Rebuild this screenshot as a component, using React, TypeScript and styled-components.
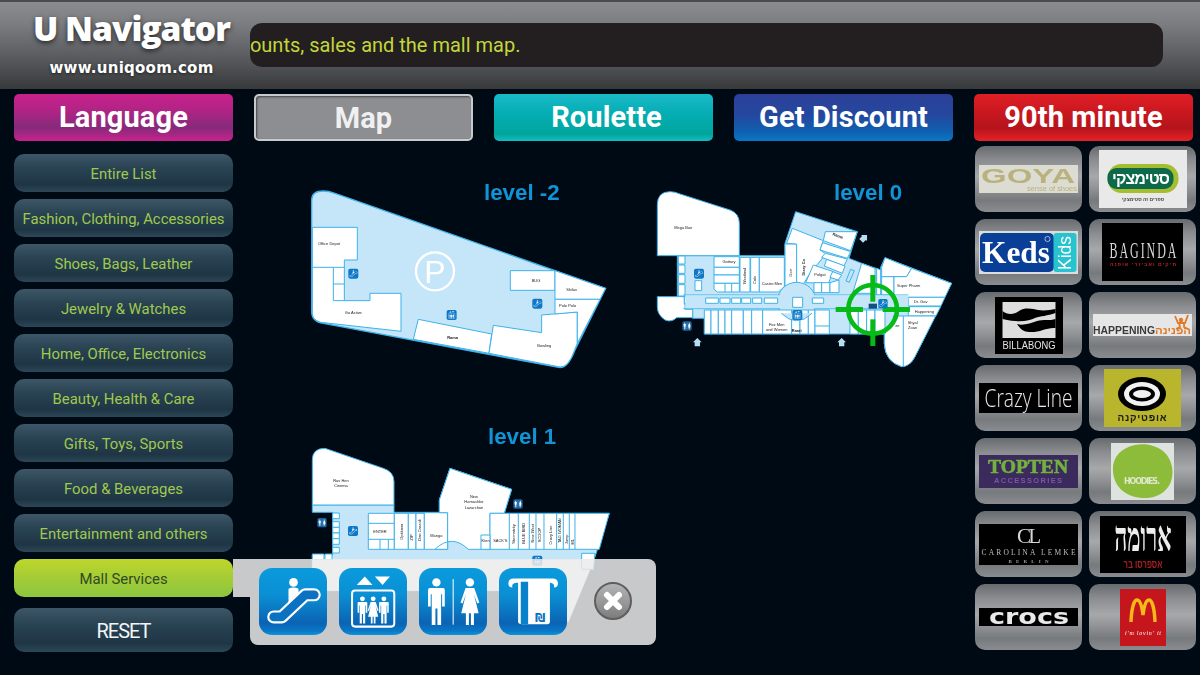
import React from "react";
import styled, { createGlobalStyle } from "styled-components";

const Global = createGlobalStyle`
  html, body { margin: 0; padding: 0; background: #000a14; }
  * { box-sizing: border-box; }
`;

const Page = styled.div`
  width: 1200px; height: 675px; overflow: hidden; position: relative;
  background: #000a14; font-family: Roboto, "Liberation Sans", sans-serif;
`;
const Header = styled.header`
  height: 89px; display: flex; align-items: center; padding: 0 37px 0 0;
  border-top: 2px solid #4a4b4d;
  background: linear-gradient(180deg, #8b8c8e 0%, #7c7d80 25%, #5d5e61 60%, #38393b 100%);
`;
const Brand = styled.div`
  width: 250px; height: 100%; flex: none; display: flex; flex-direction: column; align-items: center; padding-left: 13px;
`;
const BrandName = styled.div`
  font: 800 33.5px/40px "Open Sans", sans-serif; color: #fff; margin-top: 6px; letter-spacing: -1px;
  text-shadow: 0 2px 5px rgba(0,0,0,.65); white-space: nowrap;
`;
const BrandUrl = styled.div`
  font: 700 15px/16px "DejaVu Sans", sans-serif; color: #fff; margin-top: 12px; letter-spacing: .25px;
  text-shadow: 0 1px 3px rgba(0,0,0,.6); white-space: nowrap;
`;
const Ticker = styled.div`
  flex: 1; height: 44px; margin-top: -1px; border-radius: 12px; background: #231f20; overflow: hidden;
  display: flex; align-items: center; white-space: nowrap;
`;
const TickerText = styled.span`
  font: 400 20px/24px Roboto, sans-serif; color: #c3d63b; letter-spacing: 0; margin-left: -37px;
`;
const Body = styled.div`
  display: grid; grid-template-columns: 219px 700px 221px; column-gap: 21px; padding: 5px 0 0 14px;
  grid-template-rows: 47px 1fr; row-gap: 5px; height: 586px;
`;
const TabRow = styled.nav`
  grid-column: 1 / 4; display: grid; grid-template-columns: repeat(5, 219px); column-gap: 21px;
`;
const tabBg: Record<string, string> = {
  language: "linear-gradient(180deg,#c9218b 0%,#b02485 35%,#862a7c 72%,#a92683 87%,#cb2190 100%)",
  map: "#8d8e91",
  roulette: "linear-gradient(180deg,#1ab9c8 0%,#05aeb4 40%,#00a59c 85%,#16bcc2 100%)",
  discount: "linear-gradient(180deg,#2c3f98 0%,#24489f 45%,#0f60b0 80%,#0a78c4 100%)",
  minute: "linear-gradient(180deg,#e01f26 0%,#c9171f 40%,#b4141c 72%,#d21b22 88%,#e3232a 100%)",
};
const Tab = styled.button<{ $kind: string }>`
  height: 47px; border-radius: 5px; padding: 0 0 2px ${p => p.$kind === "roulette" ? 6 : 0}px; margin: 0;
  color: ${p => p.$kind === "map" ? "#f0f0f0" : "#fff"};
  background: ${p => tabBg[p.$kind]};
  border: ${p => p.$kind === "map" ? "2px solid #c9cacc" : "0"};
  box-shadow: ${p => p.$kind === "map" ? "inset 1px 1px 2px #444" : "none"};
  font: 700 29px/44px Roboto, sans-serif; letter-spacing: .1px; text-align: center;
`;
const SideList = styled.div`
  display: flex; flex-direction: column; gap: 7px; padding-top: 8px;
`;
const SideItem = styled.button<{ $active?: boolean; $reset?: boolean }>`
  width: 219px; height: ${p => p.$reset ? 44 : 38}px; margin-top: ${p => p.$reset ? 4 : 0}px; border: 0; padding: 2px 0 0;
  border-radius: 10px; text-align: center; white-space: nowrap;
  font: 400 ${p => p.$reset ? 20 : 14.9}px/1 Roboto, sans-serif;
  letter-spacing: ${p => p.$reset ? "-1px" : "0"};
  color: ${p => p.$active ? "#30491f" : p.$reset ? "#f2f5f5" : "#a0c94e"};
  background: ${p => p.$active
    ? "linear-gradient(180deg,#bed62b 0%,#a4cc36 50%,#8cc63f 100%)"
    : "linear-gradient(180deg,#3d5768 0%,#2a4454 35%,#1e3544 80%,#2c4757 100%)"};
  position: relative; z-index: 2;
`;
const Center = styled.main` position: relative; `;
const MapSvg = styled.svg` display: block; filter: blur(.3px); `;
const LevelLabel = styled.text`
  font: 700 22.3px "Liberation Sans", sans-serif; fill: #0f94d6;
`;
const ShopLabel = styled.text<{ $bold?: boolean }>`
  font: ${p => p.$bold ? 700 : 400} 12px "Liberation Sans", sans-serif; fill: #222; text-anchor: middle;
`;
const Panel = styled.div`
  position: absolute; left: -4px; top: 413px; width: 406px; height: 86px; border-radius: 0 8px 8px 8px;
  background: rgba(235,235,235,.85); display: flex; align-items: center; padding: 0 0 2px 9px; gap: 12px; z-index: 3;
  &::before {
    content: ""; position: absolute; left: -17px; top: 0; width: 17px; height: 38px; background: #c9c9c9;
  }
`;
const ServiceBtn = styled.button`
  width: 68px; height: 67px; padding: 0; border: 0; border-radius: 13px; flex: none;
  background: linear-gradient(180deg,#0a9bdc 0%,#0b8fd4 40%,#0a64b4 82%,#0a77c6 94%,#0a95d8 100%);
  svg { display: block; }
`;
const CloseBtn = styled.button`
  width: 38px; height: 38px; padding: 0; margin-left: 15px; border-radius: 50%; border: 2px solid #5e5e5e;
  background: linear-gradient(180deg,#b3b3b3 0%,#9a9a9a 50%,#7d7d7d 100%);
  display: flex; align-items: center; justify-content: center;
`;
const Tiles = styled.aside`
  display: grid; grid-template-columns: 107px 107px; column-gap: 7px; row-gap: 7px; grid-auto-rows: 66px;
`;
const Tile = styled.div`
  border-radius: 10px; display: flex; align-items: center; justify-content: center;
  background: linear-gradient(180deg,#686b6e 0%,#8b8d90 22%,#a6a8aa 46%,#939598 62%,#777a7d 82%,#8a8c8f 100%);
`;
const LogoSvg = styled.svg` display: block; filter: blur(.25px); `;
const LogoText = styled.text<{ $f?: string; $w?: number; $it?: boolean }>`
  font-family: ${p => p.$f || '"Liberation Sans"'}, sans-serif;
  font-weight: ${p => p.$w || 400};
  font-style: ${p => p.$it ? "italic" : "normal"};
  text-anchor: middle;
`;

const BLUE = "#3db2ea";
const Room = ({ p, fill = "#fff" }: { p: string; fill?: string }) => (
  <polygon points={p} fill={fill} stroke={BLUE} strokeWidth={3} />
);
const Line = ({ d }: { d: string }) => <path d={d} fill="none" stroke={BLUE} strokeWidth={3} />;

const EscalatorGlyph = () => (
  <g>
    <circle cx="103" cy="43" r="13" fill="#fff" />
    <path d="M88 62 Q103 54 118 62 V92 L88 112 Z" fill="#fff" />
    <path d="M44 146 H68 L138 80 H165" fill="none" stroke="#fff" strokeWidth="39" strokeLinecap="round" strokeLinejoin="round" />
    <path d="M44 146 H68 L138 80 H165" fill="none" stroke="#0a72c0" strokeWidth="26" strokeLinecap="round" strokeLinejoin="round" />
  </g>
);
const Person = ({ x, y, s = 1, dress }: { x: number; y: number; s?: number; dress?: boolean }) => (
  <g transform={`translate(${x} ${y}) scale(${s})`}>
    <circle cx="0" cy="0" r="12.5" fill="#fff" />
    {dress
      ? <path d="M-13 17 H13 L28 60 L22 63 L12 36 L26 92 H12 V127 H3 V92 H-3 V127 H-12 V92 H-26 L-12 36 L-22 63 L-28 60 Z" fill="#fff" />
      : <path d="M-20 17 H20 Q25 17 25 23 V72 H17 V35 H14 V127 H3 V78 H-3 V127 H-14 V35 H-17 V72 H-25 V23 Q-25 17 -20 17 Z" fill="#fff" />}
  </g>
);
const ElevatorGlyph = () => (
  <g>
    <polygon points="77,25 53,51 100,51" fill="#fff" />
    <polygon points="107,25 152,25 130,51" fill="#fff" />
    <rect x="39" y="67" width="126" height="108" rx="9" fill="none" stroke="#fff" strokeWidth="6" />
    <Person x={70} y={92} s={0.58} />
    <Person x={102} y={92} s={0.58} dress />
    <Person x={134} y={92} s={0.58} />
  </g>
);
const ToiletGlyph = () => (
  <g>
    <Person x={52} y={43} />
    <rect x="100.5" y="33" width="3" height="136" fill="#fff" />
    <Person x={152} y={43} dress />
  </g>
);
const AtmGlyph = () => (
  <g>
    <path d="M40 58 Q28 58 28 46 Q28 31 44 31 H160 Q176 31 176 46 Q176 58 164 58 Q168 46 152 44 V44 H52 Q36 46 40 58 Z" fill="#fff" />
    <path d="M57 41 H152 V160 Q152 168 144 168 H69 Q57 168 57 160 Z" fill="#fff" />
    <rect x="65" y="41" width="22" height="127" fill="#0a82cb" />
    <text x="123" y="161" textAnchor="middle" fill="#0a72c0" fontFamily="DejaVu Sans" fontWeight="700" fontSize="34">₪</text>
  </g>
);
const MiniIcon = ({ x, y, size, kind, dark }: { x: number; y: number; size: number; kind: "esc" | "ele" | "wc"; dark?: boolean }) => (
  <g transform={`translate(${x - size / 2} ${y - size / 2})`}>
    <rect width={size} height={size} rx={size * 0.18} fill={dark ? "#1a66a4" : "#0d78c8"} />
    <g transform={`scale(${size / 203})`}>
      {kind === "esc" && <EscalatorGlyph />}
      {kind === "ele" && <ElevatorGlyph />}
      {kind === "wc" && <ToiletGlyph />}
    </g>
  </g>
);
const Home = ({ x, y, r = 0 }: { x: number; y: number; r?: number }) => (
  <polygon transform={`translate(${x} ${y}) rotate(${r})`} points="0,-13 13,0 8,0 8,12 -8,12 -8,0 -13,0" fill="#b5def5" />
);

const LevelMinus2 = () => (
  <g transform="translate(300 180) scale(.3333)">
    <path d="M35 60 Q35 33 70 33 Q85 33 105 40 L917 325 L825 510 Q805 563 780 563 L70 430 Q35 425 35 395 Z" fill="#c5e6f8" stroke={BLUE} strokeWidth={4} />
    <path d="M37 142 H172 V240 H133 V362 H210 V340 H303 V454 L62 427 Q37 420 37 400 Z" fill="#fff" stroke={BLUE} strokeWidth={3} />
    <Line d="M37 262 H133 M100 262 V362 H133 M100 312 H133" />
    <Room p="355,418 575,462 567,520 340,478" />
    <path d="M580 436 L725 458 V405 L832 396 V490 L823 512 Q805 563 780 561 L567 520 Z" fill="#fff" stroke={BLUE} strokeWidth={3} />
    <Room p="631,272 765,272 765,331 631,331" />
    <Room p="765,272 917,325 900,358 765,358" />
    <Room p="765,358 900,358 832,490 832,396 765,402" />
    <circle cx="405" cy="274" r="57" fill="none" stroke="#fff" strokeWidth="7" />
    <text x="405" y="308" textAnchor="middle" fill="#fff" fontFamily="Liberation Sans" fontSize="96">P</text>
    <MiniIcon x={160} y={281} size={30} kind="esc" />
    <MiniIcon x={712} y={371} size={30} kind="esc" />
    <MiniIcon x={455} y={405} size={30} kind="ele" />
    <ShopLabel x={87} y={196}>Office Depot</ShopLabel>
    <ShopLabel x={708} y={305}>BUG</ShopLabel>
    <ShopLabel x={815} y={333}>Shilav</ShopLabel>
    <ShopLabel x={803} y={380}>Polo Polo</ShopLabel>
    <ShopLabel x={160} y={401}>Go Active</ShopLabel>
    <ShopLabel x={458} y={478} $bold>Rama</ShopLabel>
    <ShopLabel x={733} y={502}>Bowling</ShopLabel>
  </g>
);

const LevelZero = () => (
  <g transform="translate(640 180) scale(.3333)">
    <path d="M112 227 H435 V190 L467 95 L652 155 L627 235 L665 250 L722 270 V262 L735 233 L935 310 L825 530 Q810 560 785 560 Q735 545 733 490 V462 H193 V415 H158 V390 L133 372 V350 H112 Z" fill="#c5e6f8" stroke={BLUE} strokeWidth={3} />
    <path d="M52 75 Q52 35 90 35 Q105 35 120 42 L270 90 Q298 100 298 130 V227 H52 Z" fill="#fff" stroke={BLUE} strokeWidth={3} />
    <path d="M52 350 H133 V372 L158 390 V413 H110 Q95 428 75 420 Q52 405 52 380 Z" fill="#fff" stroke={BLUE} strokeWidth={3} />
    <Room p="115,228 135,228 135,252 115,252" />
    <Room p="115,255 135,255 135,280 115,280" />
    <Room p="115,284 135,284 135,310 115,310" />
    <Room p="115,314 135,314 135,348 115,348" />
    <Room p="133,350 158,350 158,370 133,370" />
    <Room p="135,372 158,372 158,388 135,388" />
    <Room p="165,302 185,302 185,332 165,332" />
    <Room p="222,230 298,230 298,262 222,262" />
    <Room p="222,262 298,262 298,285 222,285" />
    <Room p="222,285 298,285 298,310 222,310" />
    <Room p="222,310 298,310 298,336 232,336 222,328" />
    <Line d="M255 310 V336 M275 310 V336" />
    <Room p="300,232 330,232 330,336 300,336" />
    <Room p="332,232 358,232 358,336 332,336" />
    <Room p="358,232 433,232 433,320 415,336 358,336" />
    <Room p="435,192 470,192 470,310 435,320" />
    <Room p="457,145 550,182 540,210 558,222 510,280 490,312 470,312 470,192 440,190" />
    <Room p="556,155 652,155 632,212 550,182" />
    <Room p="548,188 632,215 622,235 540,210" />
    <Room p="556,220 622,237 612,258 545,232" />
    <Room p="560,238 615,258 607,280 553,258" />
    <Room p="520,255 580,275 565,310 497,308" />
    <Room p="578,275 605,285 595,300 570,292" />
    <Room p="522,308 545,308 545,338 522,338" />
    <Room p="545,308 570,308 570,338 545,338" />
    <Room p="570,308 597,300 597,338 570,338" />
    <Room p="632,268 643,272 628,307 618,303" fill="#c5e6f8" />
    <Room p="665,250 705,265 705,340 638,340" />
    <Room p="710,265 722,270 722,345 710,345" />
    <Room p="735,233 815,265 800,290 725,290 725,262" />
    <Room p="725,290 762,290 762,345 725,345" />
    <Room p="762,290 800,290 815,265 935,310 915,352 762,352" />
    <Room p="805,352 915,352 903,378 805,378" />
    <Room p="805,380 902,380 888,408 805,408" />
    <path d="M760 408 H887 L825 530 Q810 560 785 560 Q735 545 733 490 V462 L760 430 Z" fill="#fff" stroke={BLUE} strokeWidth={3} />
    <Line d="M790 408 V560" />
    <circle cx="470" cy="365" r="58" fill="#c5e6f8" stroke={BLUE} strokeWidth="3" />
    <path d="M130 345 H420 M130 386 H420 M525 345 H805 M525 386 H805" stroke={BLUE} strokeWidth={3} fill="none" />
    <path d="M136 346 H428 V385 H136 Z M512 346 H805 V385 H512 Z" fill="#c5e6f8" />
    {[[197, 38], [240, 30], [275, 27], [305, 27], [338, 27], [373, 40], [517, 34]].map(([x, w]) => (
      <Room key={x} p={`${x},354 ${x + w},354 ${x + w},370 ${x},370`} />
    ))}
    <Room p="458,352 488,352 488,382 458,382" />
    {[[193, 213], [213, 235], [235, 255], [255, 275], [275, 310], [310, 335], [335, 368], [368, 455], [455, 480], [480, 505], [505, 525], [525, 568], [630, 655], [655, 680], [680, 705], [705, 735]].map(([a, b]) => (
      <Room key={a} p={`${a},390 ${b},390 ${b},462 ${a},462`} />
    ))}
    <Line d="M525 438 H568" />
    <path d="M424 400 Q470 445 516 400" fill="#c5e6f8" stroke={BLUE} strokeWidth="3" />
    <g fill="#06bb18">
      <rect x="587" y="381" width="82" height="15" />
      <rect x="728" y="381" width="82" height="15" />
      <rect x="691" y="285" width="15" height="80" />
      <rect x="691" y="418" width="15" height="80" />
    </g>
    <circle cx="698" cy="388" r="73" fill="none" stroke="#06bb18" strokeWidth="14" />
    <MiniIcon x={177} y={281} size={30} kind="esc" />
    <MiniIcon x={729} y={371} size={28} kind="esc" />
    <MiniIcon x={472} y={405} size={30} kind="ele" />
    <MiniIcon x={141} y={438} size={28} kind="wc" dark />
    <rect x="686" y="371" width="25" height="15" fill="#12507f" />
    <Home x={172} y={487} />
    <Home x={605} y={487} />
    <Home x={672} y={174} r={45} />
    <ShopLabel x={130} y={146}>Mega Bair</ShopLabel>
    <ShopLabel x={267} y={249}>Gottary</ShopLabel>
    <ShopLabel transform="translate(319 288) rotate(-90)">Westland</ShopLabel>
    <ShopLabel transform="translate(349 300) rotate(-90)">Calo</ShopLabel>
    <ShopLabel x={396} y={314}>Castro Men</ShopLabel>
    <ShopLabel transform="translate(455 278) rotate(-90)">Gorr</ShopLabel>
    <ShopLabel transform="translate(494 262) rotate(-90)" $bold>Dizzy Co</ShopLabel>
    <ShopLabel transform="translate(592 171) rotate(20)" $bold>Rama</ShopLabel>
    <ShopLabel x={540} y={288}>Polgat</ShopLabel>
    <ShopLabel x={806} y={322}>Super Pharm</ShopLabel>
    <ShopLabel x={842} y={369}>Dr. Gav</ShopLabel>
    <ShopLabel x={853} y={398}>Happening</ShopLabel>
    <ShopLabel x={772} y={440}>ze</ShopLabel>
    <ShopLabel x={818} y={431}>Shyal</ShopLabel>
    <ShopLabel x={818} y={447}>Zoan</ShopLabel>
    <ShopLabel x={410} y={437}>Fox Men</ShopLabel>
    <ShopLabel x={410} y={453}>and Women</ShopLabel>
    <ShopLabel x={470} y={455} $bold>Rami</ShopLabel>
  </g>
);

const LevelOne = () => (
  <g transform="translate(240 440) scale(.3333)">
    <path d="M217 345 H278 V217 H217 V195 H462 V217 H598 V180 L630 85 L815 148 L793 220 H1108 L1062 360 L985 545 L800 452 H217 Z" fill="#c5e6f8" stroke={BLUE} strokeWidth={3} />
    <path d="M217 60 Q217 25 255 25 L430 85 Q462 95 462 125 V195 H217 Z" fill="#fff" stroke={BLUE} strokeWidth={3} />
    {[219, 245, 262, 279, 296, 322].map(y => <Room key={y} p={`278,${y} 298,${y} 298,${y + 17} 278,${y + 17}`} />)}
    <Room p="385,220 463,220 463,328 385,328" />
    <Line d="M385 250 H463 M385 298 H463 M420 298 V328 M445 298 V328" />
    <Room p="463,220 505,220 505,328 463,328" />
    <Room p="505,220 528,220 528,328 505,328" />
    <Room p="528,220 553,220 553,328 528,328" />
    <Room p="553,218 623,218 623,328 553,328" />
    <path d="M598 180 L630 85 L815 148 L793 220 H750 V328 H685 Q635 280 585 328 L623 328 V218 H598 Z" fill="#fff" stroke={BLUE} strokeWidth={3} />
    <path d="M750 220 H1108 L1078 328 H750 Z" fill="#fff" stroke={BLUE} strokeWidth={3} />
    <Line d="M808 220 V328 M835 220 V328 M868 220 V328 M888 220 V328 M912 220 V328 M950 220 V328 M970 220 V328 M988 220 V328 M1005 220 V328" />
    <Room p="723,285 750,285 750,328 723,328" />
    <Room p="217,342 252,342 252,360 217,360" />
    <Room p="255,342 276,342 276,360 255,360" />
    <path d="M217 360 H1062 L985 545 L800 452 H217 Z" fill="#fff" />
    <Room p="1025,340 1065,340 1060,388 1025,388" />
    <MiniIcon x={246} y={248} size={28} kind="wc" dark />
    <MiniIcon x={834} y={192} size={28} kind="wc" dark />
    <MiniIcon x={339} y={273} size={30} kind="esc" />
    <MiniIcon x={892} y={362} size={30} kind="ele" />
    <ShopLabel x={303} y={127}>Rav Hen</ShopLabel>
    <ShopLabel x={303} y={142}>Cinema</ShopLabel>
    <ShopLabel x={702} y={173}>New</ShopLabel>
    <ShopLabel x={702} y={190}>Hamashbir</ShopLabel>
    <ShopLabel x={702} y={206}>Lazarchan</ShopLabel>
    <ShopLabel x={420} y={280}>ENTER</ShopLabel>
    <ShopLabel transform="translate(488 275) rotate(-90)">Optikana</ShopLabel>
    <ShopLabel transform="translate(520 292) rotate(-90)">ZIP</ShopLabel>
    <ShopLabel transform="translate(544 270) rotate(-90)">Dan Cassidi</ShopLabel>
    <ShopLabel x={589} y={292}>Mango</ShopLabel>
    <ShopLabel x={737} y={305}>Kten</ShopLabel>
    <ShopLabel x={781} y={306}>SACK'S</ShopLabel>
    <ShopLabel transform="translate(825 282) rotate(-90)">Steimatzky</ShopLabel>
    <ShopLabel transform="translate(855 280) rotate(-90)">BLUE BIRD</ShopLabel>
    <ShopLabel transform="translate(881 280) rotate(-90)">Nine West</ShopLabel>
    <ShopLabel transform="translate(902 285) rotate(-90)">SCOOP</ShopLabel>
    <ShopLabel transform="translate(935 285) rotate(-90)">Crazy Line</ShopLabel>
    <ShopLabel transform="translate(963 272) rotate(-90)">TAG WOMAN</ShopLabel>
    <ShopLabel transform="translate(983 298) rotate(-90)">Jump</ShopLabel>
    <ShopLabel transform="translate(1001 305) rotate(-90)">ML</ShopLabel>
  </g>
);

const Goya = () => (
  <LogoSvg width="99" height="28" viewBox="0 0 99 28">
    <rect width="99" height="28" fill="#dcdcd2" />
    <LogoText x="49" y="18" fill="#b9b27e" fontSize="20" $w={700} textLength="94" lengthAdjust="spacingAndGlyphs">GOYA</LogoText>
    <LogoText x="73" y="26" fill="#b9b27e" fontSize="7.5" textLength="50">sense of shoes</LogoText>
  </LogoSvg>
);
const Steimatzky = () => (
  <LogoSvg width="88" height="58" viewBox="0 0 88 58">
    <rect width="88" height="58" fill="#e9e9e9" />
    <rect x="8.5" y="14" width="71" height="29" rx="14" fill="#a6bd2f" />
    <rect x="8.5" y="18" width="66" height="21" rx="9" fill="#0c6a4a" />
    <LogoText x="42" y="34" fill="#fff" fontSize="16" $w={700} textLength="58">סטימצקי</LogoText>
    <LogoText x="44" y="51" fill="#444" fontSize="5" $w={700}>ספרים זה סטימצקי</LogoText>
  </LogoSvg>
);
const Keds = () => (
  <LogoSvg width="99" height="43" viewBox="0 0 99 43">
    <rect width="99" height="43" fill="#dcdcdc" />
    <rect x="1" y="2" width="74" height="39" rx="5" fill="#0a3f98" />
    <rect x="74.5" y="2" width="23" height="39" rx="3" fill="#27c4cf" />
    <LogoText x="37" y="32" fill="#fff" fontSize="31" $w={700} $f='"Liberation Serif"' textLength="68" lengthAdjust="spacingAndGlyphs">Keds</LogoText>
    <LogoText transform="translate(92 22) rotate(-90)" fill="#fff" fontSize="18" textLength="34" lengthAdjust="spacingAndGlyphs">Kids</LogoText>
    <circle cx="68.5" cy="8" r="2.6" fill="none" stroke="#fff" strokeWidth=".6" />
  </LogoSvg>
);
const Baginda = () => (
  <LogoSvg width="81" height="58" viewBox="0 0 81 58">
    <rect width="81" height="58" fill="#000" />
    <LogoText transform="translate(41 35) scale(.5 1)" fill="#d8d8d8" fontSize="24" $f='"Liberation Serif"' textLength="134" lengthAdjust="spacing">BAGINDA</LogoText>
    <LogoText x="41" y="43" fill="#c0252b" fontSize="5" $w={700} textLength="66">תיקים ואביזרי אופנה</LogoText>
  </LogoSvg>
);
const Billabong = () => (
  <LogoSvg width="68" height="57" viewBox="0 0 68 57">
    <rect width="68" height="57" fill="#000" />
    <rect x="7.5" y="5" width="53" height="36" fill="#dedede" />
    <path d="M7.5 14 C12 18 19 18 24 14 C30 10 38 12 43 13 C49 14 55 13 60.5 12 V16 C52 19 46 19 40 21 C34 24 24 26 7.5 22 Z" fill="#000" />
    <path d="M22 27 C28 29 36 26 42 24 C48 22 55 24 60.5 22 V31 C52 30 44 36 34 35 C29 35 25 32 22 27 Z" fill="#000" />
    <LogoText x="34" y="52" fill="#e6e6e6" fontSize="10.5" textLength="53" lengthAdjust="spacingAndGlyphs">BILLABONG</LogoText>
  </LogoSvg>
);
const Happening = () => (
  <LogoSvg width="99" height="22" viewBox="0 0 99 22">
    <rect width="99" height="22" fill="#e6e6e6" />
    <LogoText x="31" y="20" fill="#3a3a3a" fontSize="10" $w={700} textLength="62" lengthAdjust="spacingAndGlyphs">HAPPENING</LogoText>
    <LogoText x="80" y="20" fill="#e07a25" fontSize="10" $w={700} textLength="36" lengthAdjust="spacingAndGlyphs">הפנינה</LogoText>
    <circle cx="88" cy="6" r="2.2" fill="#e07a25" />
    <path d="M82 2 L85 9 H92 L95 1 M86 9 L87 13 L83 15 M91 9 L91 13 L95 15" fill="none" stroke="#e07a25" strokeWidth="1.8" />
  </LogoSvg>
);
const CrazyLine = () => (
  <LogoSvg width="99" height="30" viewBox="0 0 99 30">
    <rect width="99" height="30" fill="#000" />
    <LogoText x="49.5" y="24" fill="#e9e9e9" fontSize="26" $w={300} $f='"Open Sans"' textLength="88" lengthAdjust="spacingAndGlyphs">Crazy Line</LogoText>
  </LogoSvg>
);
const Optikana = () => (
  <LogoSvg width="77" height="58" viewBox="0 0 77 58">
    <rect width="77" height="58" fill="#b9b52c" />
    <ellipse cx="38" cy="25" rx="24" ry="17" fill="#000" />
    <ellipse cx="38" cy="25" rx="18" ry="12" fill="#f2f2f2" />
    <ellipse cx="38" cy="25" rx="13" ry="7.5" fill="#000" />
    <ellipse cx="38" cy="25" rx="9" ry="4" fill="#f2f2f2" />
    <LogoText x="38" y="52" fill="#1a1a1a" fontSize="10" $w={700} textLength="49">אופטיקנה</LogoText>
  </LogoSvg>
);
const TopTen = () => (
  <LogoSvg width="99" height="33" viewBox="0 0 99 33">
    <rect width="99" height="33" fill="#3b2a5c" />
    <LogoText x="49" y="18" fill="#74b040" stroke="#74b040" strokeWidth=".6" fontSize="18" $w={700} $f='"Liberation Serif"' textLength="80" lengthAdjust="spacingAndGlyphs">TOPTEN</LogoText>
    <LogoText x="49" y="28" fill="#7a55a8" fontSize="7.5" $w={700} textLength="68">ACCESSORIES</LogoText>
  </LogoSvg>
);
const Hoodies = () => (
  <LogoSvg width="63" height="57" viewBox="0 0 63 57">
    <rect width="63" height="57" fill="#dfe3e0" />
    <path d="M24 2 C40 -1 58 6 61 24 C64 42 52 54 36 55 C18 56 3 46 2 28 C1 14 10 5 24 2 Z" fill="#8dbb3a" />
    <LogoText x="31" y="41" fill="#dfe8cf" fontSize="8" $w={700} $f='"DejaVu Sans"' textLength="36">HOODIES.</LogoText>
  </LogoSvg>
);
const Carolina = () => (
  <LogoSvg width="99" height="41" viewBox="0 0 99 41">
    <rect width="99" height="41" fill="#000" />
    <LogoText x="50" y="19" fill="#d8d8d8" fontSize="21" $f='"Liberation Serif"' textLength="24">CL</LogoText>
    <LogoText x="49.5" y="31" fill="#bdbdbd" fontSize="7.5" $f='"Liberation Serif"' textLength="94" lengthAdjust="spacing">CAROLINA LEMKE</LogoText>
    <LogoText x="49.5" y="39" fill="#9a9a9a" fontSize="5" $f='"Liberation Serif"' $w={700} textLength="40" lengthAdjust="spacing">BERLIN</LogoText>
  </LogoSvg>
);
const Aroma = () => (
  <LogoSvg width="86" height="57" viewBox="0 0 86 57">
    <rect width="86" height="57" fill="#000" />
    <LogoText x="43" y="35" fill="#eee" fontSize="42" $w={700} $f='"Liberation Serif"' textLength="57" lengthAdjust="spacingAndGlyphs">ארומה</LogoText>
    <LogoText x="43" y="52" fill="#a81e24" fontSize="11" $w={700} textLength="39" lengthAdjust="spacingAndGlyphs">אספרסו בר</LogoText>
  </LogoSvg>
);
const Crocs = () => (
  <LogoSvg width="99" height="18" viewBox="0 0 99 18">
    <rect width="99" height="18" fill="#000" />
    <LogoText x="50" y="16" fill="#e9e9e9" fontSize="22" $w={700} $f='"DejaVu Sans"' textLength="80" lengthAdjust="spacingAndGlyphs">crocs</LogoText>
  </LogoSvg>
);
const McDonalds = () => (
  <LogoSvg width="46" height="57" viewBox="0 0 46 57">
    <rect width="46" height="57" fill="#c4161c" />
    <path d="M11 33 C11.5 20 14 11 17 11 C20 11 22 18 23 26 C24 18 26 11 29 11 C32 11 34.5 20 35 33" fill="none" stroke="#f7b917" strokeWidth="3.4" />
    <LogoText x="23" y="46" fill="#fff" fontSize="6" $it $f='"Liberation Serif"' textLength="36">i'm lovin' it</LogoText>
  </LogoSvg>
);

const sideItems = [
  "Entire List", "Fashion, Clothing, Accessories", "Shoes, Bags, Leather", "Jewelry & Watches",
  "Home, Office, Electronics", "Beauty, Health & Care", "Gifts, Toys, Sports", "Food & Beverages", "Entertainment and others",
];
const tabs = [
  ["language", "Language"], ["map", "Map"], ["roulette", "Roulette"], ["discount", "Get Discount"], ["minute", "90th minute"],
];
const logos = [Goya, Steimatzky, Keds, Baginda, Billabong, Happening, CrazyLine, Optikana, TopTen, Hoodies, Carolina, Aroma, Crocs, McDonalds];

export default function App() {
  return (
    <Page>
      <Global />
      <Header>
        <Brand>
          <BrandName>U Navigator</BrandName>
          <BrandUrl>www.uniqoom.com</BrandUrl>
        </Brand>
        <Ticker><TickerText>discounts, sales and the mall map.</TickerText></Ticker>
      </Header>
      <Body>
        <TabRow>
          {tabs.map(([k, t]) => <Tab key={k} $kind={k}>{t}</Tab>)}
        </TabRow>
        <SideList>
          {sideItems.map(t => <SideItem key={t}>{t}</SideItem>)}
          <SideItem $active>Mall Services</SideItem>
          <SideItem $reset>RESET</SideItem>
        </SideList>
        <Center>
          <MapSvg width="700" height="529" viewBox="254 146 700 529">
            <LevelMinus2 />
            <LevelZero />
            <LevelOne />
            <LevelLabel x="484" y="200">level -2</LevelLabel>
            <LevelLabel x="834" y="200">level 0</LevelLabel>
            <LevelLabel x="488" y="444">level 1</LevelLabel>
          </MapSvg>
          <Panel>
            <ServiceBtn><svg width="68" height="67" viewBox="0 0 203 200"><EscalatorGlyph /></svg></ServiceBtn>
            <ServiceBtn><svg width="68" height="67" viewBox="0 0 203 200"><ElevatorGlyph /></svg></ServiceBtn>
            <ServiceBtn><svg width="68" height="67" viewBox="0 0 203 200"><ToiletGlyph /></svg></ServiceBtn>
            <ServiceBtn><svg width="68" height="67" viewBox="0 0 203 200"><AtmGlyph /></svg></ServiceBtn>
            <CloseBtn>
              <svg width="22" height="22" viewBox="0 0 22 22"><path d="M5 5 L17 17 M17 5 L5 17" stroke="#fff" strokeWidth="6" strokeLinecap="round" /></svg>
            </CloseBtn>
          </Panel>
        </Center>
        <Tiles>
          {logos.map((L, i) => <Tile key={i}><L /></Tile>)}
        </Tiles>
      </Body>
    </Page>
  );
}
